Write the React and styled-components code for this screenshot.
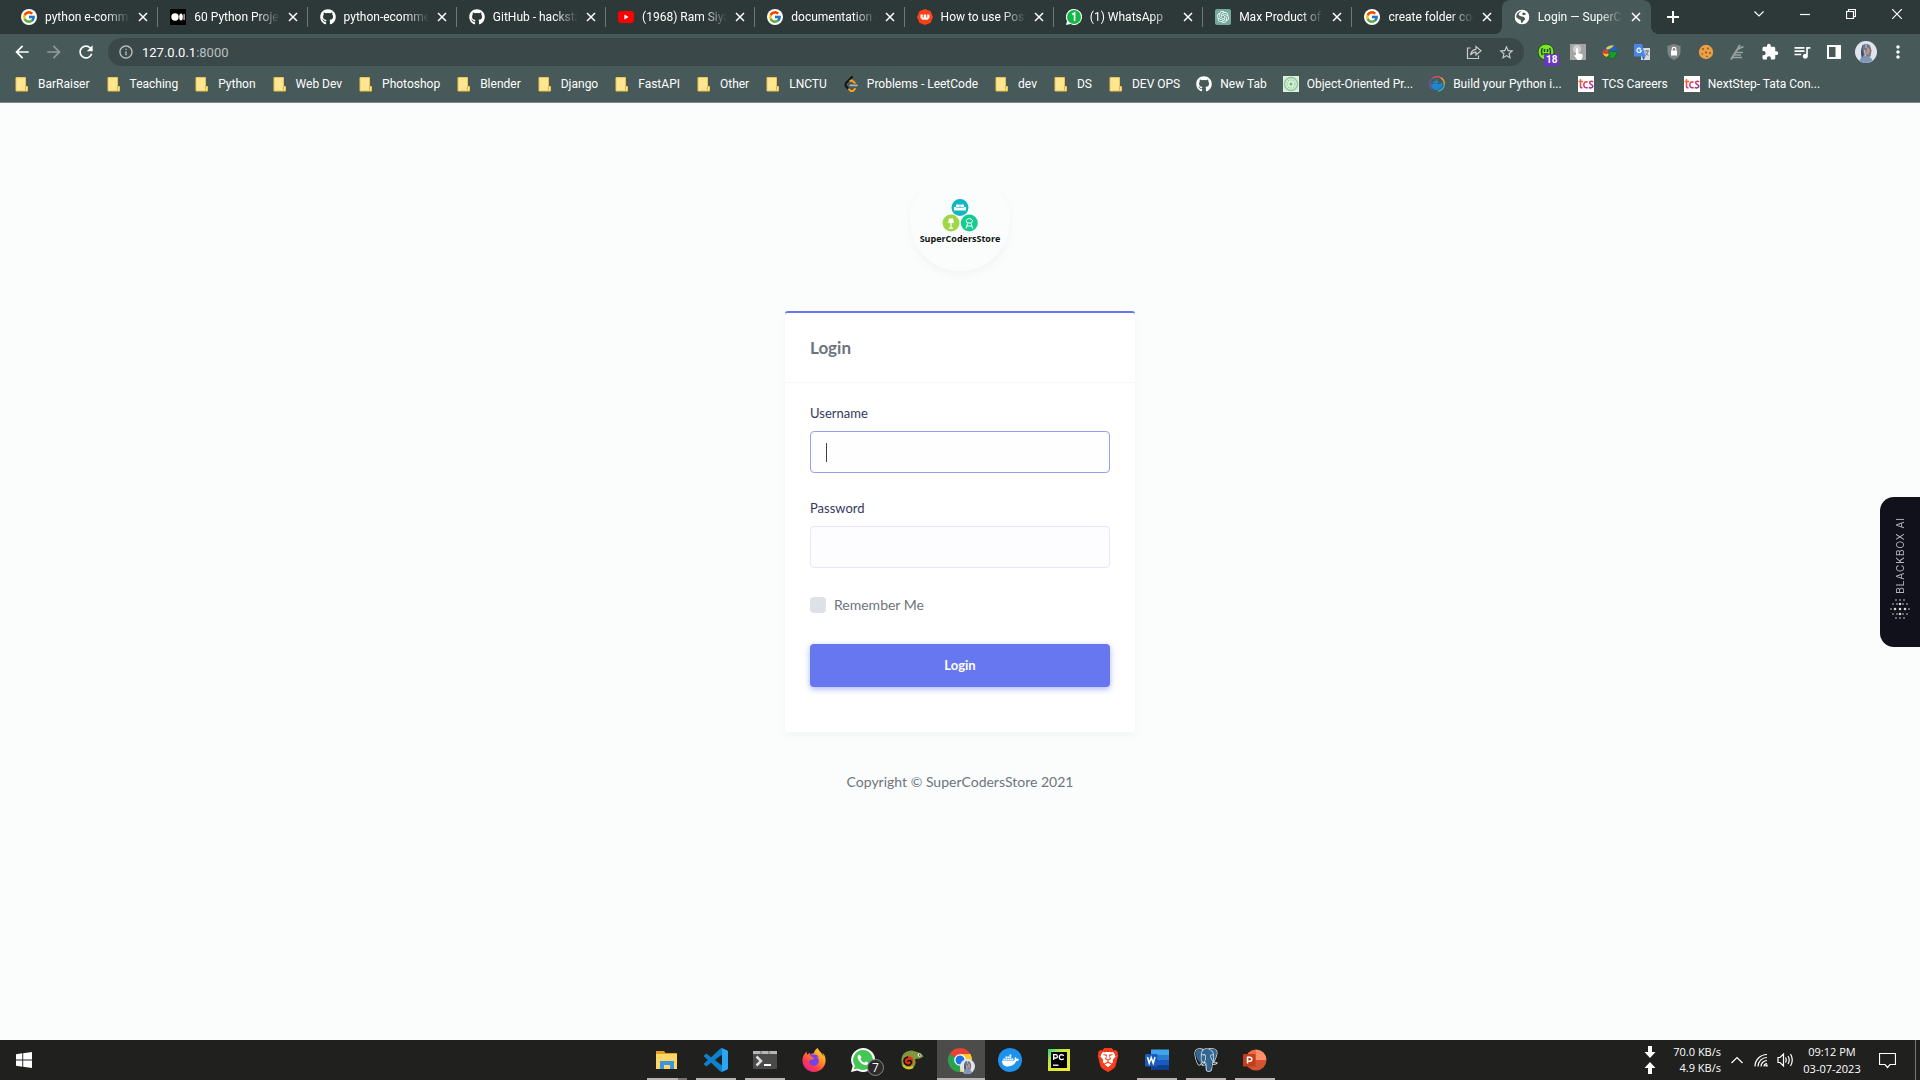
import React from "react";
import styled, { createGlobalStyle, css } from "styled-components";
import { FcGoogle } from "react-icons/fc";
import { FaGithub, FaDocker } from "react-icons/fa6";
import { SiOpenai, SiPostgresql, SiBrave, SiFirefoxbrowser } from "react-icons/si";
import {
  MdArrowBack,
  MdArrowForward,
  MdRefresh,
  MdInfoOutline,
  MdStarBorder,
  MdExtension,
  MdMoreVert,
  MdQueueMusic,
} from "react-icons/md";

const GlobalStyle = createGlobalStyle`
  *, *::before, *::after { box-sizing: border-box; }
  body { margin: 0; background: #fbfdfc; }
  button, input { font: inherit; margin: 0; }
  button { border: 0; padding: 0; background: none; color: inherit; }
  a { color: inherit; text-decoration: none; }
  svg { display: block; flex: none; }
`;

const Desktop = styled.div`
  min-height: 100vh;
  display: flex;
  flex-direction: column;
  font-family: Roboto, "Liberation Sans", sans-serif;
  font-size: 12px;
`;

/* ---------- browser frame ---------- */

const BrowserFrame = styled.header`
  background: #475a59;
  color: #fff;
  border-bottom: 1px solid #7b8988;
`;

const TabStrip = styled.div`
  display: flex;
  height: 34px;
  padding-left: 9px;
  background: #2c3938;
`;

const TabList = styled.div`
  flex: 1;
  min-width: 0;
  display: flex;
`;

const Tab = styled.div`
  position: relative;
  flex: 1 1 0;
  min-width: 0;
  display: flex;
  align-items: center;
  gap: 5px;
  padding: 0 7px 0 12px;
  ${(p) =>
    p.$active
      ? css`
          background: #475a59;
          border-radius: 8px 8px 0 0;
          &::before,
          &::after {
            content: "";
            position: absolute;
            bottom: 0;
            width: 8px;
            height: 8px;
          }
          &::before {
            right: 100%;
            background: radial-gradient(circle at 0 0, #2c3938 8px, #475a59 8px);
          }
          &::after {
            left: 100%;
            background: radial-gradient(circle at 100% 0, #2c3938 8px, #475a59 8px);
          }
        `
      : css`
          background: linear-gradient(#6d7877, #6d7877) right center / 1px 20px no-repeat;
          &:has(+ [data-active="true"]) {
            background: none;
          }
        `}
`;

const TabTitle = styled.button`
  flex: 1;
  min-width: 0;
  display: flex;
  align-items: center;
  gap: 8px;
  height: 24px;
  text-align: left;
`;

const TabLabel = styled.span`
  flex: 1;
  min-width: 0;
  overflow: hidden;
  white-space: nowrap;
  line-height: 18px;
  mask-image: linear-gradient(to right, #000 calc(100% - 24px), transparent);
`;

const TabClose = styled.button`
  display: grid;
  place-items: center;
  width: 16px;
  height: 16px;
`;

const StripTools = styled.div`
  width: 269px;
  display: flex;
  justify-content: space-between;
`;

const NewTab = styled.button`
  display: grid;
  place-items: center;
  width: 28px;
  height: 34px;
  margin-left: 8px;
`;

const WindowButtons = styled.div`
  display: flex;
`;

const WindowButton = styled.button`
  display: grid;
  place-items: center;
  width: 46px;
  height: 28px;
`;

const Toolbar = styled.div`
  display: flex;
  align-items: center;
  height: 36px;
  padding: 0 6px;
`;

const NavButton = styled.button`
  display: grid;
  place-items: center;
  width: 32px;
  height: 32px;
  font-size: 20px;
  color: ${(p) => (p.$dim ? "#8f9b9a" : "#fff")};
`;

const AddressBar = styled.div`
  flex: 1;
  display: flex;
  align-items: center;
  height: 28px;
  margin: 0 6px;
  padding: 0 2px 0 10px;
  border-radius: 14px;
  background: #3b4849;
  color: #b9c0c0;
  font-size: 13px;
`;

const SiteInfo = styled.button`
  display: grid;
  place-items: center;
  width: 16px;
  height: 24px;
  margin-right: 8px;
  font-size: 16px;
`;

const AddressInput = styled.input`
  field-sizing: content;
  border: 0;
  padding: 0;
  outline: 0;
  background: none;
  color: #fff;
`;

const AddressPort = styled.span`
  flex: 1;
`;

const AddressAction = styled.button`
  display: grid;
  place-items: center;
  width: 32px;
  height: 28px;
  color: #c5cccb;
  font-size: 17px;
`;

const Extensions = styled.div`
  display: flex;
`;

const ExtensionButton = styled.button`
  position: relative;
  display: grid;
  place-items: center;
  width: 32px;
  height: 32px;
  font-size: 18px;
`;

const CountBadge = styled.span`
  position: absolute;
  left: 14px;
  top: 18px;
  padding: 0 2px;
  border-radius: 2px;
  background: #6a35c0;
  font-size: 10px;
  font-weight: 700;
  line-height: 12px;
`;

const Bookmarks = styled.nav`
  display: flex;
  align-items: center;
  gap: 16px;
  height: 32px;
  padding: 0 14px 4px;
`;

const Bookmark = styled.a`
  display: flex;
  align-items: center;
  gap: 8px;
  line-height: 16px;
  white-space: nowrap;
`;

/* ---------- login page ---------- */

const Page = styled.main`
  position: relative;
  flex: 1;
  display: flex;
  flex-direction: column;
  align-items: center;
  padding: 68px 16px 48px;
  background: #fbfdfc;
  color: #6c757d;
  font-family: Lato, "Open Sans", sans-serif;
  font-size: 14px;
  line-height: 20px;
`;

const Brand = styled.div`
  display: flex;
  flex-direction: column;
  align-items: center;
  justify-content: center;
  width: 100px;
  height: 100px;
  margin-bottom: 40px;
  padding-top: 2px;
  border-radius: 50%;
  background: #fbfdfd;
  box-shadow: 0 4px 8px rgba(0, 0, 0, 0.04);
  color: #111;
  font-family: "Open Sans", sans-serif;
  font-size: 9px;
  font-weight: 700;
  line-height: 14px;
`;

const Card = styled.section`
  width: 100%;
  max-width: 350px;
  border-top: 2px solid #6777ef;
  border-radius: 3px;
  background: #fff;
  box-shadow: 0 4px 8px rgba(0, 0, 0, 0.03);
`;

const CardHeader = styled.div`
  display: flex;
  align-items: center;
  height: 70px;
  padding: 0 25px;
  border-bottom: 1px solid #f6f7f8;
`;

const CardTitle = styled.h1`
  margin: 0;
  font-size: 17px;
  font-weight: 700;
  line-height: 28px;
`;

const LoginForm = styled.form`
  display: flex;
  flex-direction: column;
  gap: 25px;
  padding: 20px 25px 45px;
`;

const Field = styled.div`
  display: flex;
  flex-direction: column;
  gap: 8px;
`;

const FieldLabel = styled.label`
  color: #34395e;
  font-size: 13px;
  line-height: 20px;
`;

const FieldInput = styled.input`
  width: 100%;
  height: 42px;
  padding: 10px 15px;
  border: 1px solid ${(p) => (p.$focused ? "#95a0f4" : "#e4e6fc")};
  border-radius: 4px;
  outline: 0;
  color: #495057;
  background: ${(p) =>
    p.$focused
      ? "linear-gradient(#3c434a, #3c434a) 15px center / 1px 19px no-repeat #fefeff"
      : "#fdfdff"};
`;

const Remember = styled.label`
  display: flex;
  align-items: center;
  gap: 8px;
  padding-bottom: 2px;
  line-height: 24px;
`;

const Checkbox = styled.input`
  appearance: none;
  width: 16px;
  height: 16px;
  border-radius: 4px;
  background: #dee2e6;
  &:checked {
    background: #6777ef;
  }
`;

const SubmitButton = styled.button`
  height: 43px;
  padding-bottom: 2px;
  border-radius: 4px;
  background: #6777ef;
  box-shadow: 0 2px 6px #acb5f6;
  color: #fff;
  font-size: 13px;
  font-weight: 700;
`;

const Copyright = styled.footer`
  margin-top: 40px;
`;

const AssistantTab = styled.button`
  position: absolute;
  right: 0;
  top: 50%;
  transform: translateY(-50%);
  display: flex;
  flex-direction: column;
  align-items: center;
  gap: 6px;
  width: 40px;
  height: 150px;
  padding-top: 20px;
  border-radius: 14px 0 0 14px;
  background: #10111a;
  color: #b4b5ba;
`;

const AssistantName = styled.span`
  writing-mode: vertical-rl;
  rotate: 180deg;
  font-family: Inter, sans-serif;
  font-size: 10px;
  letter-spacing: 1px;
  line-height: 12px;
`;

/* ---------- taskbar ---------- */

const Taskbar = styled.footer`
  display: grid;
  grid-template-columns: 1fr auto 1fr;
  height: 40px;
  background: #20211f;
  color: #fff;
  font-family: "Open Sans", "Noto Sans", sans-serif;
  font-size: 11px;
  line-height: 16px;
`;

const StartButton = styled.button`
  display: grid;
  place-items: center;
  width: 48px;
`;

const AppList = styled.div`
  display: flex;
  gap: 1px;
  padding-left: 2px;
`;

const AppButton = styled.button`
  position: relative;
  display: grid;
  place-items: center;
  width: 48px;
  background: ${(p) => (p.$active ? "#4c4d4b" : "none")};
  &::after {
    content: "";
    position: absolute;
    left: ${(p) => (p.$active ? "0" : "4px")};
    right: ${(p) => (p.$active ? "0" : "4px")};
    bottom: 0;
    height: 2px;
    background: ${(p) =>
      p.$stacked
        ? "linear-gradient(to right, #b9b3b5 31px, #777475 31px)"
        : p.$open
        ? "#b9b3b5"
        : "none"};
  }
`;

const AppCount = styled.span`
  position: absolute;
  left: 28px;
  top: 19px;
  width: 17px;
  height: 17px;
  border: 1px solid #888;
  border-radius: 50%;
  background: #2b2b2b;
  line-height: 15px;
  font-size: 12px;
`;

const Tray = styled.div`
  display: flex;
  justify-content: flex-end;
`;

const NetworkSpeed = styled.div`
  display: grid;
  grid-template-columns: 12px 52px;
  column-gap: 13px;
  align-content: center;
  align-items: center;
  justify-items: end;
  margin-right: 4px;
  white-space: nowrap;
`;

const TrayButton = styled.button`
  display: grid;
  place-items: center;
  width: 24px;
`;

const Clock = styled.time`
  display: flex;
  flex-direction: column;
  align-items: center;
  justify-content: center;
  gap: 1px;
  width: 70px;
`;

const Notifications = styled.button`
  display: grid;
  place-items: center;
  width: 40px;
`;

const ShowDesktop = styled.button`
  width: 5px;
  margin-left: 8px;
  border-left: 1px solid #777;
`;

/* ---------- drawings ---------- */

const CloseX = () => (
  <svg width="10" height="10" viewBox="0 0 10 10" stroke="#fff" strokeWidth="1.5">
    <path d="M1 1l8 8M9 1l-8 8" />
  </svg>
);

const MediumIcon = () => (
  <svg width="16" height="16" viewBox="0 0 16 16">
    <rect width="16" height="16" fill="#000" />
    <g fill="#fff">
      <circle cx="5" cy="8" r="3.7" />
      <ellipse cx="11" cy="8" rx="1.8" ry="3.5" />
      <rect x="13.6" y="5" width="1" height="6" />
    </g>
  </svg>
);

const YoutubeIcon = () => (
  <svg width="16" height="16" viewBox="0 0 16 16">
    <rect y="2" width="16" height="12" rx="3" fill="#f00" />
    <path d="M6.4 5.5v5l4.2-2.5z" fill="#fff" />
  </svg>
);

const OrangeBadgeIcon = () => (
  <svg width="16" height="16" viewBox="0 0 16 16">
    <path d="M8 0l5.6 2.3L16 8l-2.4 5.7L8 16l-5.6-2.3L0 8l2.4-5.7z" fill="#ff4015" />
    <path d="M3.5 5.5h2.300v3h1V5.500h2.400v3h1v-3h2.300v3.200l-2 2H7.500V9.800L7 10.700H5.500l-2-2z" fill="#fff" />
  </svg>
);

const ChatCountIcon = () => (
  <svg width="16" height="16" viewBox="0 0 16 16">
    <path d="M8 0a8 8 0 1 1-3.6 15.1L0 16l1-4A8 8 0 0 1 8 0z" fill="#fff" />
    <circle cx="8" cy="8" r="7" fill="#13b948" />
    <path d="M6.3 5.5L8.6 4v8" stroke="#fff" strokeWidth="1.6" fill="none" />
  </svg>
);

const GlobeIcon = () => (
  <svg width="16" height="16" viewBox="0 0 16 16">
    <circle cx="8" cy="8" r="7" fill="#fff" />
    <path d="M8.500 1.500Q5 3 4.500 5.500q1 2 3.500 2t3 2-1.500 2.200L8 14.500Q6.500 13 6.800 11 4 10 1.500 7.500q1-4 4-5.500z" fill="#475a59" />
    <path d="M9 3.500q2.500 0 3 2l-2.500.8L8 5z" fill="#475a59" />
    <circle cx="8" cy="8" r="6.600" fill="none" stroke="#fff" strokeWidth="1.300" />
  </svg>
);

const OpenAiTile = styled.span`
  display: grid;
  place-items: center;
  width: 16px;
  height: 16px;
  border-radius: 2px;
  background: #74aa9c;
`;

const FolderIcon = () => (
  <svg width="16" height="16" viewBox="0 0 16 16">
    <path d="M2 1.500h9.500v9h2V15H2z" fill="#ffe693" stroke="#eec44e" />
    <path d="M11.500 10.500v4" stroke="#e2b33c" />
  </svg>
);

const LeetIcon = () => (
  <svg width="16" height="16" viewBox="0 0 24 24">
    <path d="M13.500 1.500L5 10a4.200 4.200 0 0 0 0 6l4 4" fill="none" stroke="#111" strokeWidth="3" strokeLinecap="round" />
    <path d="M9 20l1.400 1.300a4 4 0 0 0 5.600 0l2-2M11 7.500l2-.8 4.500 3.500" fill="none" stroke="#ffa116" strokeWidth="3" strokeLinecap="round" />
    <path d="M11 14h10" stroke="#b3b3b3" strokeWidth="2.800" strokeLinecap="round" />
  </svg>
);

const MandalaIcon = () => (
  <svg width="16" height="16" viewBox="0 0 16 16" fill="none">
    <rect width="16" height="16" fill="#dff0df" />
    <circle cx="8" cy="8" r="6.500" stroke="#8fcb9b" strokeWidth="1.500" />
    <circle cx="8" cy="8" r="4" stroke="#9bd3a5" strokeDasharray="1.500 1" strokeWidth="1.500" />
    <circle cx="8" cy="8" r="1.500" fill="#6bb97c" />
  </svg>
);

const DockerRingIcon = () => (
  <svg width="16" height="16" viewBox="0 0 16 16" fill="none">
    <path d="M2.500 13A7.300 7.300 0 0 1 4 1.900" stroke="#7a4fb5" strokeWidth="1.300" />
    <path d="M4 1.900A7.300 7.300 0 0 1 12 1.900" stroke="#e8544f" strokeWidth="1.300" />
    <path d="M12 1.900A7.300 7.300 0 0 1 15.300 8" stroke="#f2a33a" strokeWidth="1.300" />
    <path d="M15.300 8A7.300 7.300 0 0 1 9 15.200" stroke="#33b5c9" strokeWidth="1.300" />
    <path d="M2 8h9l2-1.500.600 1.500C13 12 10 14 7 14S2.500 12 2 8z" fill="#1c86d1" />
    <path d="M4 5.500h5v2H4zM6.500 3.500h2v2h-2z" fill="#1c86d1" />
  </svg>
);

const TcsIcon = () => (
  <svg width="16" height="16" viewBox="0 0 16 16" fill="none">
    <defs>
      <linearGradient id="tcs" x1="0" y1="0" x2="1" y2="1">
        <stop offset="0" stopColor="#f08a1d" />
        <stop offset=".5" stopColor="#e5325d" />
        <stop offset="1" stopColor="#8d2bb0" />
      </linearGradient>
    </defs>
    <rect width="16" height="16" fill="#fff" />
    <path
      d="M2.500 3v7.500q0 1.500 2 1.200M.5 5.500H5M9.500 6.200C7 5 5.800 7 5.800 8.800S7.200 12.500 9.700 11.500M15.300 5.600c-3-1-4.300.5-3.300 1.800s3 1.400 2.800 3-2.600 1.900-4 .9"
      stroke="url(#tcs)"
      strokeWidth="1.500"
    />
  </svg>
);

const ShareIcon = () => (
  <svg width="16" height="16" viewBox="0 0 16 16" fill="none" stroke="currentColor" strokeWidth="1.200">
    <path d="M4.500 4H1.500v10.500h11V11.500" />
    <path d="M4.500 11C5 7.500 7 5.500 10 5.300V2.500l5 4.300-5 4.200V8.200C7.500 8.200 6 9 4.500 11z" />
  </svg>
);

const GreenFaceIcon = () => (
  <svg width="18" height="18" viewBox="0 0 18 18">
    <circle cx="9" cy="9" r="8" fill="#78e32b" stroke="#2c4a1f" />
    <path d="M5.500 5q-2 4 0 7M12.500 5q2 4 0 7M7.500 6v3M10.500 6v3M6.500 11h5" stroke="#24451b" strokeWidth="1.400" fill="none" />
  </svg>
);

const TapIcon = () => (
  <svg width="16" height="16" viewBox="0 0 16 16">
    <rect width="16" height="16" fill="#a5a5a5" />
    <circle cx="7" cy="5" r="4" fill="#cfcfcf" />
    <path d="M6 4.500q1-1 2 0V9l4.500 1.200v3L11 16H7.500L4 11.500l2-.5z" fill="#fff" />
  </svg>
);

const DownloadGlobeIcon = () => (
  <svg width="16" height="16" viewBox="0 0 16 16">
    <circle cx="9" cy="7" r="6.500" fill="#2463b8" />
    <path d="M4 4Q7 .5 12 1.500L9.500 4 5 6z" fill="#e7c93b" />
    <path d="M0 8q2-3 6-2.500L7 9l-3 3q-3-.5-4-4z" fill="#d8452e" />
    <path d="M1 9q3 2 6 0l-1 4q-4 0-5-4z" fill="#e9c62f" />
    <path d="M6 8.500l4-2 1 1.500 5-1-4 8-7-2 3-1.500z" fill="#1f9a2b" stroke="#0f4f18" strokeWidth=".5" />
  </svg>
);

const TranslateIcon = () => (
  <svg width="16" height="16" viewBox="0 0 16 16" fill="none">
    <rect x="7" y="4" width="9" height="12" fill="#d8dcdf" />
    <path d="M0 0h8l3.500 12.500H0z" fill="#4a86ea" />
    <path d="M7.300 6H5.200M6.600 4.700a2.200 2.200 0 1 0 .7 1.500" stroke="#fff" strokeWidth="1.200" />
    <path d="M10.500 7h4.500M12.800 6v1M14.200 7q-.7 3-3 4.500M11.500 8.500q1 2 3 3.200" stroke="#6b7378" />
    <path d="M8 12.500h3.500L9.500 16z" fill="#2f62c0" />
  </svg>
);

const ShieldLockIcon = () => (
  <svg width="16" height="16" viewBox="0 0 16 16">
    <path d="M8 0l6.500 2v6q0 5-6.500 8Q1.500 13 1.500 8V2z" fill="#7f8584" />
    <rect x="5" y="6.500" width="6" height="5" fill="#fff" />
    <path d="M6.200 6.500V5q0-1.600 1.800-1.600T9.800 5v1.500" stroke="#fff" strokeWidth="1.200" fill="none" />
  </svg>
);

const CookieIcon = () => (
  <svg width="16" height="16" viewBox="0 0 16 16">
    <circle cx="8" cy="8" r="7.200" fill="#e89f45" />
    <g fill="#8f4e1a">
      <circle cx="5" cy="5" r=".9" />
      <circle cx="10" cy="4.500" r=".9" />
      <circle cx="8" cy="8.500" r="1" />
      <circle cx="4.300" cy="10" r=".8" />
      <circle cx="12" cy="9" r=".9" />
      <circle cx="9" cy="12.500" r=".8" />
    </g>
  </svg>
);

const FeatherIcon = () => (
  <svg width="16" height="16" viewBox="0 0 16 16" stroke="#98a2a1" fill="none">
    <path d="M1 15.500L10 1" strokeWidth="2" />
    <path d="M7.500 5.500l6-3M6 8.500h7M4.500 11h6.500M3 13.500h9" strokeWidth="1.700" />
  </svg>
);

const SidePanelIcon = () => (
  <svg width="14" height="14" viewBox="0 0 14 14">
    <path d="M0 0h14v14H0zM2 2v10h6.500V2z" fill="#fff" fillRule="evenodd" />
  </svg>
);

const Avatar = ({ size }) => (
  <svg width={size} height={size} viewBox="0 0 22 22">
    <circle cx="11" cy="11" r="11" fill="#dfe4ee" />
    <path d="M7 4.500Q11 1 15 4.500l1.500 5-1 6-5.500 1-3-5z" fill="#6d7788" />
    <path d="M12 6.500q3 .5 3 3.500l-1 4-3-1z" fill="#c48f7c" />
    <path d="M4.500 20Q6 15 9.500 13.500l3 2q4 .5 5 4A11 11 0 0 1 11 22q-4 0-6.500-2z" fill="#8296b8" />
    <path d="M8 3.500q-1.500 5 1 10l-2 3.500q-2.500-7 1-13.500z" fill="#424b5c" />
    <path d="M11 3v4M9.500 9l1 6" stroke="#c9d0de" />
  </svg>
);

const StoreLogo = () => (
  <svg width="36" height="33" viewBox="0 0 36 33" fill="none">
    <circle cx="18" cy="8.500" r="8.500" fill="#10b5c6" />
    <circle cx="9" cy="24" r="8.500" fill="#a1d646" />
    <circle cx="27.300" cy="24" r="8.500" fill="#15cb93" />
    <path d="M14 5.500h8v2.500h2v3.500H12V8h2z" fill="#fff" />
    <path d="M14 8.500h8M18 5.500v3" stroke="#10b5c6" strokeWidth=".6" />
    <path d="M7 19.500h4l1 4.500H6z" fill="#fff" />
    <path d="M9 24v5M7 29.200h4" stroke="#fff" strokeWidth="1.200" />
    <path d="M24 21.500q3.300-4 6.600 0l-1 2.500h-4.600zM25.500 24.500l-1.500 5M29.200 24.500l1.500 5M25 27h4.500" stroke="#fff" />
  </svg>
);

const dots = [
  [1, [-4, 0, 4]],
  [5, [-7, -3, 0, 3, 7]],
  [10, [-9, -5, 0, 5, 9]],
  [15, [-7, -3, 0, 3, 7]],
  [19, [-4, 0, 4]],
];
const DotsIcon = () => (
  <svg width="20" height="20" viewBox="0 0 20 20" fill="#d5d5da">
    {dots.map(([y, xs]) =>
      xs.map((x) => (
        <circle key={x + "," + y} cx={10 + x} cy={y} r={Math.abs(x) + Math.abs(y - 10) < 6 ? 1.3 : 0.8} />
      ))
    )}
  </svg>
);

const WindowsIcon = () => (
  <svg width="16" height="16" viewBox="0 0 16 16" fill="#fff">
    <path d="M0 2.200L6.300 1.300V7.500H0zM7.200 1.200L16 0v7.500H7.200zM0 8.500h6.300v6.200L0 13.800zM7.200 8.500H16V16l-8.800-1.200z" />
  </svg>
);

const ExplorerIcon = () => (
  <svg width="24" height="24" viewBox="0 0 24 24">
    <path d="M1 3h8l1.500 2H22v15H1z" fill="#e0a21c" />
    <path d="M1 6h21v15H1z" fill="#fcd667" />
    <path d="M5 13h14v8h-4v-4H9v4H5z" fill="#3a96dd" />
  </svg>
);

const CodeIcon = () => (
  <svg width="24" height="24" viewBox="0 0 24 24">
    <path
      d="M23.150 2.587L18.210.210a1.494 1.494 0 0 0-1.705.290l-9.460 8.630-4.120-3.128a.999.999 0 0 0-1.276.057L.327 7.261A1 1 0 0 0 .326 8.740L3.899 12 .326 15.260a1 1 0 0 0 .001 1.479L1.650 17.940a.999.999 0 0 0 1.276.057l4.120-3.128 9.460 8.630a1.492 1.492 0 0 0 1.704.290l4.942-2.377A1.500 1.500 0 0 0 24 20.060V3.939a1.500 1.500 0 0 0-.850-1.352zm-5.146 14.861L10.826 12l7.178-5.448v10.896z"
      fill="#1180cc"
    />
    <path d="M18 .2l5.150 2.387a1.500 1.500 0 0 1 .85 1.352V20.060a1.500 1.500 0 0 1-.85 1.352L18 23.800z" fill="#2aa6f2" />
  </svg>
);

const TerminalIcon = () => (
  <svg width="24" height="24" viewBox="0 0 24 24" fill="none">
    <rect y="3" width="24" height="18" rx="1" fill="#4a4a4a" />
    <path d="M0 3h24v3H0z" fill="#b5b5b5" />
    <path d="M8 3v3M16 3v3" stroke="#666" />
    <path d="M3.500 8.500L8 13l-4.500 4.500" stroke="#ddd" strokeWidth="2.500" />
    <path d="M11 17h7" stroke="#fff" strokeWidth="2" />
  </svg>
);

const FirefoxIcon = () => (
  <svg width="24" height="24" viewBox="0 0 24 24">
    <defs>
      <linearGradient id="fox" x1="1" y1="0" x2="0.200" y2="1">
        <stop offset="0" stopColor="#fff24a" />
        <stop offset=".4" stopColor="#ff9420" />
        <stop offset=".75" stopColor="#ff3750" />
        <stop offset="1" stopColor="#e2209b" />
      </linearGradient>
    </defs>
    <circle cx="12" cy="12.500" r="7.500" fill="#7542e5" />
    <SiFirefoxbrowser size={24} color="url(#fox)" fill="url(#fox)" />
  </svg>
);

const WhatsappIcon = () => (
  <svg width="24" height="24" viewBox="0 0 24 24">
    <path d="M12 0a12 12 0 1 1-5.700 22.500L0 24l1.700-6A12 12 0 0 1 12 0z" fill="#fff" />
    <path d="M12 2a10 10 0 1 1-5.200 18.600L2.800 21.500 3.900 17.700A10 10 0 0 1 12 2z" fill="#45c756" />
    <path
      d="M8.500 6.500c-1.500.3-2.200 2-1.700 3.700 1 3.200 3.500 5.800 6.900 6.900 1.800.5 3.500-.3 3.800-2l-2.700-1.600-1.400 1.300c-1.800-.7-3.300-2.200-4-3.900l1.200-1.400z"
      fill="#fff"
    />
  </svg>
);

const ChameleonIcon = () => (
  <svg width="24" height="24" viewBox="0 0 24 24" fill="none">
    <path d="M1.500 13C1 6 6 2.500 12 2.500L17 4q5 1 6.500 4.500L20 10.500l-5 .5.500 4.500-2.500-.5-1-3.500z" fill="#84963c" />
    <circle cx="8.500" cy="14.500" r="7" fill="#84963c" />
    <path d="M3 17q4 5 10 2" stroke="#e3c51f" strokeWidth="2" />
    <circle cx="8.500" cy="13" r="4.800" fill="#e22f17" />
    <path d="M8 14q0-2 2-1.500t1 3-4 1.500-3-4 4-4" stroke="#111" strokeWidth="1.500" />
    <circle cx="19.500" cy="7" r="1.800" fill="#e8edd8" />
    <circle cx="19.800" cy="7" r=".8" fill="#111" />
  </svg>
);

const ChromeIcon = () => (
  <svg width="28" height="28" viewBox="0 0 28 28">
    <path d="M13 14L2.600 8A12 12 0 0 1 23.400 8z" fill="#ea4335" />
    <path d="M13 14L2.600 8A12 12 0 0 0 13 26z" fill="#2ba24c" />
    <path d="M13 14V26A12 12 0 0 0 23.400 8H13z" fill="#fcc934" />
    <circle cx="13" cy="14" r="5.800" fill="#fff" />
    <circle cx="13" cy="14" r="4.500" fill="#1a73e8" />
    <g transform="translate(13 13)">
      <Avatar size={15} />
    </g>
  </svg>
);

const RoundTile = styled.span`
  display: grid;
  place-items: center;
  width: 24px;
  height: 24px;
  border-radius: 50%;
  background: #1d91ee;
`;

const PycharmIcon = () => (
  <svg width="22" height="22" viewBox="0 0 22 22" fill="none">
    <defs>
      <linearGradient id="pyc" x1="0" y1="0" x2="1" y2="1">
        <stop offset="0" stopColor="#21d789" />
        <stop offset=".35" stopColor="#cbe83b" />
        <stop offset="1" stopColor="#f5ee2f" />
      </linearGradient>
    </defs>
    <rect width="22" height="22" fill="url(#pyc)" />
    <rect x="3" y="3" width="16" height="16" fill="#000" />
    <path d="M5.700 11V5.700h2q1.700 0 1.700 1.700T7.700 9H5.700M15.800 6.700q-1-1-2.300-1-2.200.3-2.200 2.500t2.200 2.500q1.500 0 2.300-1" stroke="#fff" strokeWidth="1.300" />
    <path d="M5 16.200h5.500" stroke="#fff" strokeWidth="1.300" />
  </svg>
);

const BraveIcon = () => (
  <svg width="24" height="24" viewBox="0 0 24 24">
    <path d="M6 4h12l2 5-2.500 9L12 22l-5.500-4L4 9z" fill="#fff" />
    <SiBrave size={24} color="#fb3c1c" />
  </svg>
);

const WordIcon = () => (
  <svg width="24" height="24" viewBox="0 0 24 24" fill="none">
    <rect x="6" y="1.500" width="18" height="6" fill="#41a5ee" />
    <rect x="6" y="7" width="18" height="5" fill="#2b7cd3" />
    <rect x="6" y="12" width="18" height="5" fill="#185abd" />
    <rect x="6" y="17" width="18" height="5" fill="#103f91" />
    <rect y="6" width="12.500" height="12.500" rx="1" fill="#185abd" />
    <path d="M2.500 9l1.700 6.300L6.200 9.500l2 5.800L10 9" stroke="#fff" strokeWidth="1.500" />
  </svg>
);

const ElephantIcon = () => (
  <svg width="24" height="24" viewBox="0 0 24 24">
    <path d="M2 3q3-3 8-1.500 8-2 12 1 2 3-1.500 10.500l2 1-5 2-.5 6-3 1.500-2-1-.5-6.500-5-1Q1 10 2 3z" fill="#336791" />
    <SiPostgresql size={24} color="#dbe4ec" />
  </svg>
);

const PowerpointIcon = () => (
  <svg width="24" height="24" viewBox="0 0 24 24" fill="none">
    <path d="M13 1.500a10.500 10.500 0 0 0-10.500 10.500H13z" fill="#ed6c47" />
    <path d="M13 1.500A10.500 10.500 0 0 1 23.500 12H13z" fill="#ff8f6b" />
    <path d="M2.500 12a10.500 10.500 0 0 0 21 0z" fill="#d35230" />
    <rect y="6" width="12.500" height="12.500" rx="1" fill="#c43e1c" />
    <path d="M4.500 15.500V9.200h2.300q2 0 2 2t-2 2H4.500" stroke="#fff" strokeWidth="1.500" />
  </svg>
);

const SpeedArrow = ({ up }) => (
  <svg width="12" height="12" viewBox="0 0 12 12" fill="#fff">
    <path d={up ? "M6 0l5.500 6H8v6H4V6H.5z" : "M6 12l5.500-6H8V0H4v6H.5z"} />
  </svg>
);

const LineIcon = ({ width, height, d, stroke = 1.2 }) => (
  <svg width={width} height={height} viewBox={`0 0 ${width} ${height}`} fill="none" stroke="#fff" strokeWidth={stroke}>
    <path d={d} />
  </svg>
);

/* ---------- data ---------- */

const tabs = [
  { title: "python e-commerce", icon: <FcGoogle size={16} />, plate: true },
  { title: "60 Python Projects", icon: <MediumIcon /> },
  { title: "python-ecommerce", icon: <FaGithub size={16} /> },
  { title: "GitHub - hackstar", icon: <FaGithub size={16} /> },
  { title: "(1968) Ram Siya Ram", icon: <YoutubeIcon /> },
  { title: "documentation of", icon: <FcGoogle size={16} />, plate: true },
  { title: "How to use Postgres", icon: <OrangeBadgeIcon /> },
  { title: "(1) WhatsApp", icon: <ChatCountIcon /> },
  {
    title: "Max Product of A",
    icon: (
      <OpenAiTile>
        <SiOpenai size={12} />
      </OpenAiTile>
    ),
  },
  { title: "create folder command", icon: <FcGoogle size={16} />, plate: true },
  { title: "Login — SuperCoders", icon: <GlobeIcon />, active: true },
];

const GooglePlate = styled.span`
  display: grid;
  place-items: center;
  width: 16px;
  height: 16px;
  border-radius: 50%;
  background: #fff;
  & > svg {
    width: 14px;
    height: 14px;
  }
`;

const bookmarks = [
  ["BarRaiser", <FolderIcon />],
  ["Teaching", <FolderIcon />],
  ["Python", <FolderIcon />],
  ["Web Dev", <FolderIcon />],
  ["Photoshop", <FolderIcon />],
  ["Blender", <FolderIcon />],
  ["Django", <FolderIcon />],
  ["FastAPI", <FolderIcon />],
  ["Other", <FolderIcon />],
  ["LNCTU", <FolderIcon />],
  ["Problems - LeetCode", <LeetIcon />],
  ["dev", <FolderIcon />],
  ["DS", <FolderIcon />],
  ["DEV OPS", <FolderIcon />],
  ["New Tab", <FaGithub size={16} />],
  ["Object-Oriented Pr...", <MandalaIcon />],
  ["Build your Python i...", <DockerRingIcon />],
  ["TCS Careers", <TcsIcon />],
  ["NextStep- Tata Con...", <TcsIcon />],
];

const extensions = [
  ["Emoji", <GreenFaceIcon />, 18],
  ["Tap to select", <TapIcon />],
  ["Download manager", <DownloadGlobeIcon />],
  ["Translate", <TranslateIcon />],
  ["Privacy", <ShieldLockIcon />],
  ["Cookies", <CookieIcon />],
  ["Notes", <FeatherIcon />],
  ["Extensions", <MdExtension />],
  ["Media", <MdQueueMusic size={20} />],
  ["Side panel", <SidePanelIcon />],
  ["Profile", <Avatar size={22} />],
  ["Menu", <MdMoreVert size={20} />],
];

const apps = [
  { name: "File Explorer", icon: <ExplorerIcon />, open: true, stacked: true },
  { name: "Code", icon: <CodeIcon />, open: true },
  { name: "Terminal", icon: <TerminalIcon />, open: true },
  { name: "Firefox", icon: <FirefoxIcon /> },
  { name: "WhatsApp", icon: <WhatsappIcon />, count: 7 },
  { name: "Chameleon", icon: <ChameleonIcon /> },
  { name: "Chrome", icon: <ChromeIcon />, open: true, active: true },
  {
    name: "Docker",
    icon: (
      <RoundTile>
        <FaDocker size={17} />
      </RoundTile>
    ),
  },
  { name: "PyCharm", icon: <PycharmIcon /> },
  { name: "Brave", icon: <BraveIcon /> },
  { name: "Word", icon: <WordIcon />, open: true },
  { name: "PostgreSQL", icon: <ElephantIcon />, open: true },
  { name: "PowerPoint", icon: <PowerpointIcon />, open: true },
];

const windowControls = [
  ["Search tabs", { width: 10, height: 8, d: "M.5 1.500L5 6l4.500-4.500" }],
  ["Minimize", { width: 10, height: 10, d: "M0 5.500h10" }],
  ["Restore", { width: 10, height: 10, d: "M.5 2.500h7v7h-7zM2.500 2.500v-2h7v7h-2" }],
  ["Close", { width: 10, height: 10, d: "M0 0l10 10M10 0L0 10" }],
];

export default function App() {
  return (
    <Desktop>
      <GlobalStyle />
      <BrowserFrame>
        <TabStrip>
          <TabList>
            {tabs.map((tab, i) => (
              <Tab key={i} $active={tab.active} data-active={!!tab.active}>
                <TabTitle type="button">
                  {tab.plate ? <GooglePlate>{tab.icon}</GooglePlate> : tab.icon}
                  <TabLabel>{tab.title}</TabLabel>
                </TabTitle>
                <TabClose type="button" aria-label="Close tab">
                  <CloseX />
                </TabClose>
              </Tab>
            ))}
          </TabList>
          <StripTools>
            <NewTab type="button" aria-label="New tab">
              <LineIcon width={12} height={12} d="M6 0v12M0 6h12" stroke={2} />
            </NewTab>
            <WindowButtons>
              {windowControls.map(([name, drawing]) => (
                <WindowButton key={name} type="button" aria-label={name}>
                  <LineIcon {...drawing} />
                </WindowButton>
              ))}
            </WindowButtons>
          </StripTools>
        </TabStrip>
        <Toolbar>
          <NavButton type="button" aria-label="Back">
            <MdArrowBack />
          </NavButton>
          <NavButton type="button" aria-label="Forward" $dim>
            <MdArrowForward />
          </NavButton>
          <NavButton type="button" aria-label="Reload">
            <MdRefresh />
          </NavButton>
          <AddressBar>
            <SiteInfo type="button" aria-label="Site information">
              <MdInfoOutline />
            </SiteInfo>
            <AddressInput aria-label="Address" defaultValue="127.0.0.1" />
            <AddressPort>:8000</AddressPort>
            <AddressAction type="button" aria-label="Share">
              <ShareIcon />
            </AddressAction>
            <AddressAction type="button" aria-label="Bookmark this page">
              <MdStarBorder />
            </AddressAction>
          </AddressBar>
          <Extensions>
            {extensions.map(([name, icon, count]) => (
              <ExtensionButton key={name} type="button" aria-label={name}>
                {icon}
                {count && <CountBadge>{count}</CountBadge>}
              </ExtensionButton>
            ))}
          </Extensions>
        </Toolbar>
        <Bookmarks>
          {bookmarks.map(([name, icon]) => (
            <Bookmark key={name} href="#">
              {icon}
              {name}
            </Bookmark>
          ))}
        </Bookmarks>
      </BrowserFrame>

      <Page>
        <Brand>
          <StoreLogo />
          SuperCodersStore
        </Brand>
        <Card>
          <CardHeader>
            <CardTitle>Login</CardTitle>
          </CardHeader>
          <LoginForm>
            <Field>
              <FieldLabel htmlFor="username">Username</FieldLabel>
              <FieldInput id="username" type="text" $focused />
            </Field>
            <Field>
              <FieldLabel htmlFor="password">Password</FieldLabel>
              <FieldInput id="password" type="password" />
            </Field>
            <Remember>
              <Checkbox type="checkbox" />
              Remember Me
            </Remember>
            <SubmitButton type="button">Login</SubmitButton>
          </LoginForm>
        </Card>
        <Copyright>Copyright © SuperCodersStore 2021</Copyright>
        <AssistantTab type="button">
          <AssistantName>BLACKBOX AI</AssistantName>
          <DotsIcon />
        </AssistantTab>
      </Page>

      <Taskbar>
        <StartButton type="button" aria-label="Start">
          <WindowsIcon />
        </StartButton>
        <AppList>
          {apps.map((app) => (
            <AppButton
              key={app.name}
              type="button"
              aria-label={app.name}
              $open={app.open}
              $active={app.active}
              $stacked={app.stacked}
            >
              {app.icon}
              {app.count && <AppCount>{app.count}</AppCount>}
            </AppButton>
          ))}
        </AppList>
        <Tray>
          <NetworkSpeed>
            <SpeedArrow />
            <span>70.0 KB/s</span>
            <SpeedArrow up />
            <span>4.9 KB/s</span>
          </NetworkSpeed>
          <TrayButton type="button" aria-label="Show hidden icons">
            <LineIcon width={12} height={8} d="M.5 7L6 1.500 11.500 7" />
          </TrayButton>
          <TrayButton type="button" aria-label="Network">
            <LineIcon
              width={14}
              height={14}
              d="M1 13.500A12 12 0 0 1 13 1.500M4 13.500a9 9 0 0 1 9-9M7 13.500a6 6 0 0 1 6-6M10 13.500a3 3 0 0 1 3-3M12 12h1v1h-1z"
            />
          </TrayButton>
          <TrayButton type="button" aria-label="Volume">
            <LineIcon
              width={17}
              height={14}
              d="M1 4.500h2L6.500 1v12L3 9.500H1zM8.500 4.500q1.500 2.500 0 5M11 3q2.500 4 0 8M13.500 1q3.500 6 0 12"
            />
          </TrayButton>
          <Clock>
            <span>09:12 PM</span>
            <span>03-07-2023</span>
          </Clock>
          <Notifications type="button" aria-label="Notifications">
            <LineIcon width={17} height={17} d="M.5 1.500h16v11H11L8.500 15.500 6 12.500H.5z" />
          </Notifications>
          <ShowDesktop type="button" aria-label="Show desktop" />
        </Tray>
      </Taskbar>
    </Desktop>
  );
}
